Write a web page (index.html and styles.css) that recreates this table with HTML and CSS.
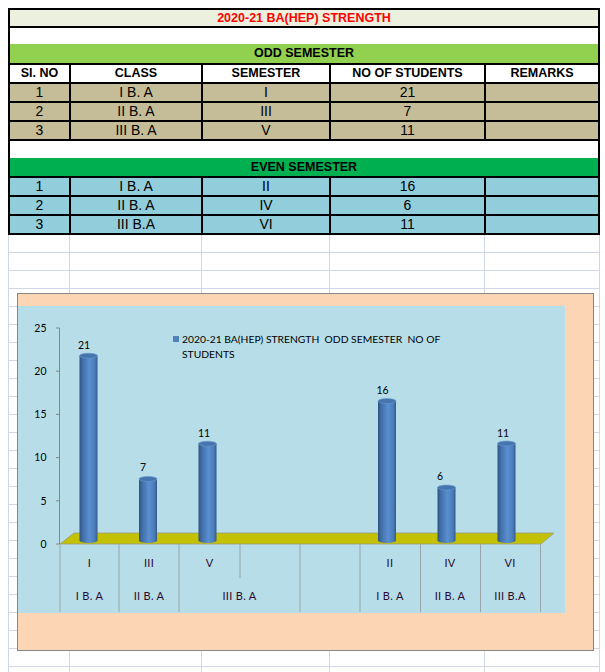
FILE: index.html
```html
<!DOCTYPE html>
<html>
<head>
<meta charset="utf-8">
<title>2020-21 BA(HEP) STRENGTH</title>
<link rel="stylesheet" href="styles.css">
</head>
<body>
<div class="sheet">
  <div class="title">2020-21 BA(HEP) STRENGTH</div>
  <div class="blank"></div>
  <div class="band odd">ODD SEMESTER</div>
  <div class="row head"><div>SI. NO</div><div>CLASS</div><div>SEMESTER</div><div>NO OF STUDENTS</div><div>REMARKS</div></div>
  <div class="row tan"><div>1</div><div>I B. A</div><div>I</div><div>21</div><div></div></div>
  <div class="row tan"><div>2</div><div>II B. A</div><div>III</div><div>7</div><div></div></div>
  <div class="row tan"><div>3</div><div>III B. A</div><div>V</div><div>11</div><div></div></div>
  <div class="blank tall"></div>
  <div class="band even">EVEN SEMESTER</div>
  <div class="row blue"><div>1</div><div>I B. A</div><div>II</div><div>16</div><div></div></div>
  <div class="row blue"><div>2</div><div>II B. A</div><div>IV</div><div>6</div><div></div></div>
  <div class="row blue"><div>3</div><div>III B.A</div><div>VI</div><div>11</div><div></div></div>
  <div class="grid"><div></div><div></div><div></div><div></div><div></div></div>

  <div class="chart">
    <div class="plot">
      <svg class="plot-svg" width="547" height="307" viewBox="0 0 547 307" xmlns="http://www.w3.org/2000/svg">
        <defs>
          <linearGradient id="cyl" x1="0" x2="1" y1="0" y2="0">
            <stop offset="0" stop-color="#2f5382"/>
            <stop offset="0.18" stop-color="#416fa8"/>
            <stop offset="0.55" stop-color="#5a8fd0"/>
            <stop offset="0.85" stop-color="#4a7cb9"/>
            <stop offset="1" stop-color="#34598a"/>
          </linearGradient>
        </defs>

        <!-- y axis -->
        <g class="axis">
          <line x1="41.5" y1="22" x2="41.5" y2="238"/>
          <line x1="38" y1="22" x2="41.5" y2="22"/>
          <line x1="38" y1="65.2" x2="41.5" y2="65.2"/>
          <line x1="38" y1="108.4" x2="41.5" y2="108.4"/>
          <line x1="38" y1="151.6" x2="41.5" y2="151.6"/>
          <line x1="38" y1="194.8" x2="41.5" y2="194.8"/>
          <line x1="38" y1="238" x2="41.5" y2="238"/>
        </g>
        <g class="ylab">
          <text x="28.5" y="25.7">25</text>
          <text x="28.5" y="68.9">20</text>
          <text x="28.5" y="112.1">15</text>
          <text x="28.5" y="155.3">10</text>
          <text x="28.5" y="198.5">5</text>
          <text x="28.5" y="241.7">0</text>
        </g>

        <!-- floor -->
        <polygon class="floor" points="42,238 56,227 536,227 523,238"/>

        <!-- category axis grid -->
        <g class="cat">
          <line x1="42" y1="238" x2="42" y2="306"/>
          <line x1="101" y1="238" x2="101" y2="306"/>
          <line x1="161" y1="238" x2="161" y2="306"/>
          <line x1="222" y1="238" x2="222" y2="272"/>
          <line x1="282" y1="238" x2="282" y2="306"/>
          <line x1="342" y1="238" x2="342" y2="306"/>
          <line x1="402.5" y1="238" x2="402.5" y2="306"/>
          <line x1="462.5" y1="238" x2="462.5" y2="306"/>
          <line x1="522.5" y1="238" x2="522.5" y2="306"/>
        </g>
        <g class="clab">
          <text x="71.5" y="261">I</text>
          <text x="131" y="261">III</text>
          <text x="191.5" y="261">V</text>
          <text x="372" y="261">II</text>
          <text x="432" y="261">IV</text>
          <text x="492" y="261">VI</text>
          <text x="71.5" y="294">I B. A</text>
          <text x="131" y="294">II B. A</text>
          <text x="221.5" y="294">III B. A</text>
          <text x="372" y="294">I B. A</text>
          <text x="432" y="294">II B. A</text>
          <text x="492" y="294">III B.A</text>
        </g>

        <!-- bars -->
        <g class="bar">
          <ellipse cx="70.5" cy="234.5" rx="9" ry="2.5" fill="url(#cyl)"/>
          <rect x="61.5" y="49.7" width="18" height="184.8" fill="url(#cyl)"/>
          <ellipse class="cap" cx="70.5" cy="49.7" rx="9" ry="2.5"/>
        </g>
        <g class="bar">
          <ellipse cx="130" cy="234.5" rx="9" ry="2.5" fill="url(#cyl)"/>
          <rect x="121" y="172.9" width="18" height="61.6" fill="url(#cyl)"/>
          <ellipse class="cap" cx="130" cy="172.9" rx="9" ry="2.5"/>
        </g>
        <g class="bar">
          <ellipse cx="189.5" cy="234.5" rx="9" ry="2.5" fill="url(#cyl)"/>
          <rect x="180.5" y="137.7" width="18" height="96.8" fill="url(#cyl)"/>
          <ellipse class="cap" cx="189.5" cy="137.7" rx="9" ry="2.5"/>
        </g>
        <g class="bar">
          <ellipse cx="369" cy="234.5" rx="9" ry="2.5" fill="url(#cyl)"/>
          <rect x="360" y="95" width="18" height="139.5" fill="url(#cyl)"/>
          <ellipse class="cap" cx="369" cy="95" rx="9" ry="2.5"/>
        </g>
        <g class="bar">
          <ellipse cx="428.5" cy="234.5" rx="9" ry="2.5" fill="url(#cyl)"/>
          <rect x="419.5" y="181.5" width="18" height="53" fill="url(#cyl)"/>
          <ellipse class="cap" cx="428.5" cy="181.5" rx="9" ry="2.5"/>
        </g>
        <g class="bar">
          <ellipse cx="488.5" cy="234.5" rx="9" ry="2.5" fill="url(#cyl)"/>
          <rect x="479.5" y="137.5" width="18" height="97" fill="url(#cyl)"/>
          <ellipse class="cap" cx="488.5" cy="137.5" rx="9" ry="2.5"/>
        </g>

        <!-- value labels -->
        <g class="vlab">
          <text x="66" y="43">21</text>
          <text x="125" y="165">7</text>
          <text x="186" y="131">11</text>
          <text x="364.5" y="88">16</text>
          <text x="422" y="174">6</text>
          <text x="485" y="131">11</text>
        </g>

        <!-- legend -->
        <rect class="legend-key" x="155" y="30" width="6" height="6"/>
        <g class="legend">
          <text x="164" y="36.5">2020-21 BA(HEP) STRENGTH  ODD SEMESTER  NO OF</text>
          <text x="164" y="51.5">STUDENTS</text>
        </g>
      </svg>
    </div>
  </div>
</div>
</body>
</html>
```

FILE: styles.css
```css
html, body {
  overflow: hidden;
}

body {
  margin: 8px 0 0 8px;
  background: #ffffff;
  font-family: "Liberation Sans", Arial, sans-serif;
  color: #000;
}

.sheet {
  position: relative;
  width: 592px;
}

.title {
  height: 16px;
  line-height: 16px;
  border: 2px solid #000;
  background: #EBF1DE;
  color: #ff0000;
  font-weight: bold;
  font-size: 12.5px;
  text-align: center;
}

.blank {
  height: 16px;
  border-left: 2px solid #000;
  border-right: 2px solid #000;
  background: #fff;
}

.blank.tall {
  height: 17px;
}

.band {
  border: 2px solid #000;
  border-top: 0;
  text-align: center;
  font-weight: bold;
  font-size: 12.5px;
}

.band.odd {
  height: 19px;
  line-height: 19px;
  background: #92D050;
}

.band.even {
  height: 18px;
  line-height: 18px;
  background: #00B050;
}

.row {
  display: grid;
  grid-template-columns: 61px 132px 128px 155px 114px;
  height: 17px;
  border-left: 2px solid #000;
  border-bottom: 2px solid #000;
}

.row > div {
  border-right: 2px solid #000;
  text-align: center;
  line-height: 17px;
  font-size: 14px;
  white-space: nowrap;
}

.row.head > div {
  font-weight: bold;
  font-size: 12.5px;
}

.tan {
  background: #C4BD97;
}

.blue {
  background: #92CDDC;
}

.grid {
  display: grid;
  grid-template-columns: 61px 132px 128px 155px 115px;
  height: 437px;
  border-left: 1px solid #D0D7E5;
  background: repeating-linear-gradient(to bottom, transparent 0, transparent 17px, #D0D7E5 17px, #D0D7E5 18px);
}

.grid > div {
  border-right: 1px solid #D0D7E5;
}

.chart {
  position: absolute;
  left: 9px;
  top: 285px;
  width: 575px;
  height: 344px;
  padding-top: 12px;
  border: 1px solid #868686;
  background: #FCD5B5;
}

.plot {
  width: 547px;
  height: 307px;
  background: #B7DEE8;
}

.plot-svg {
  display: block;
  font-family: Lato, "Open Sans", sans-serif;
}

.axis line {
  stroke: #868686;
  stroke-width: 1;
}

.ylab text {
  font-size: 10.5px;
  text-anchor: end;
  fill: #000;
}

.floor {
  fill: #C4C200;
  stroke: #9a9a80;
  stroke-width: 0.8;
}

.cat line {
  stroke: #9aa4a8;
  stroke-width: 1;
}

.clab text {
  font-size: 11px;
  letter-spacing: 0.3px;
  text-anchor: middle;
  fill: #2a0a30;
}

.cap {
  fill: #4675ad;
  stroke: #6a98d2;
  stroke-width: 0.6;
}

.vlab text {
  font-size: 10.5px;
  text-anchor: middle;
  fill: #000;
}

.legend-key {
  fill: #4F81BD;
}

.legend text {
  font-size: 10.3px;
  fill: #000;
  white-space: pre;
}
```
